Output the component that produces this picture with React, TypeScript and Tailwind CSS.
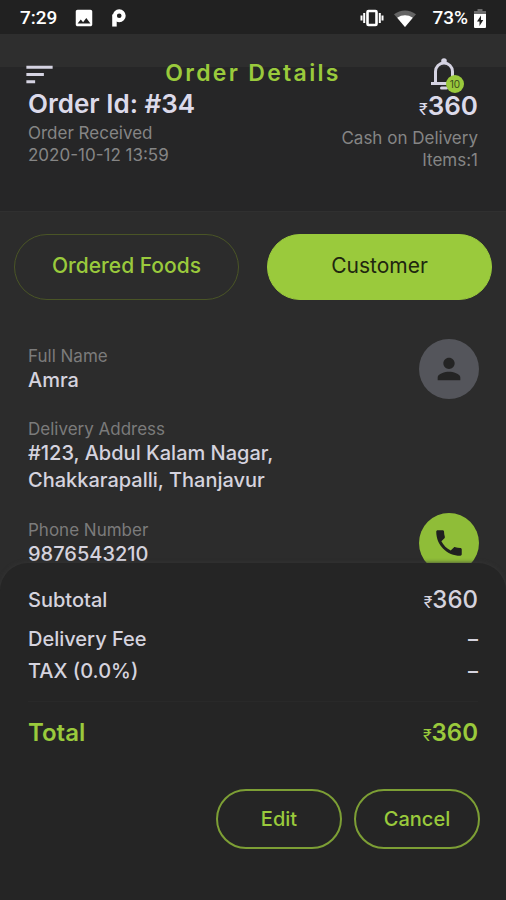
import { MdImage, MdPerson, MdPhone, MdSort } from 'react-icons/md';
import clsx from 'clsx';

interface Charge {
    label: string;
    amount: number | null;
}

const order = {
    id: 34,
    status: 'Order Received',
    date: '2020-10-12 13:59',
    payment: 'Cash on Delivery',
    items: 1,
    total: 360,
};

const charges: Charge[] = [
    { label: 'Delivery Fee', amount: null },
    { label: 'TAX (0.0%)', amount: null },
];

function Price({ value }: { value: number }) {
    return (
        <span>
            <span className="text-base font-normal">₹</span>
            {value}
        </span>
    );
}

function StatusBar() {
    return (
        <div className="flex h-[34px] items-center justify-between bg-[#212121] px-5 pt-0.5 font-['Roboto',sans-serif] text-[19px] font-medium text-white">
            <div className="flex items-center">
                <span>7:29</span>
                <MdImage className="ml-4 size-[22px]" />
                <svg viewBox="0 0 16 20" className="ml-4 h-[18px] w-[15px]" fill="none" stroke="currentColor" strokeWidth="4.600">
                    <circle cx="8.800" cy="7.500" r="4.900" />
                    <path d="M3.500 6v13.500" strokeWidth="5" />
                </svg>
            </div>
            <div className="flex items-center">
                <svg viewBox="0 0 24 18" className="h-[18px] w-6" fill="none" stroke="currentColor" strokeWidth="2">
                    <rect x="7.500" y="2" width="9" height="14" rx="1" strokeWidth="2.600" />
                    <path d="M4.200 4v10M19.800 4v10M1.500 6.500v5M22.500 6.500v5" />
                </svg>
                <svg viewBox="0 0 22 17" className="ml-2.5 h-[17px] w-[22px]" fill="currentColor">
                    <path d="M0 4.200C6.500-.9 15.500-.9 22 4.200L11 17z" opacity=".3" />
                    <path d="M3.200 7.800C8 4.500 14 4.500 18.800 7.800L11 17z" />
                </svg>
                <span className="ml-4">73%</span>
                <svg viewBox="0 0 12 19" className="ml-1.5 h-[19px] w-3">
                    <path d="M3.500 0h5v2H12v3H0V2h3.500z" fill="#6b6b6b" />
                    <path d="M0 5h12v13a1 1 0 0 1-1 1H1a1 1 0 0 1-1-1z" fill="#fff" />
                    <path d="M7 6.500 3 12.500h2.500V17L9.300 11H7z" fill="#212121" />
                </svg>
            </div>
        </div>
    );
}

function BellIcon() {
    return (
        <svg viewBox="0 0 28 34" className="h-[34px] w-7" fill="none" stroke="currentColor" strokeWidth="3">
            <path d="M5.500 26V14.500a8.500 8.500 0 0 1 17 0V26" />
            <path d="M1 26.500h26" />
            <path d="M11.500 31h5" strokeLinecap="round" />
            <circle cx="14" cy="4" r="2.800" fill="currentColor" stroke="none" />
        </svg>
    );
}

function Header() {
    return (
        <header className="bg-[linear-gradient(#2e2e2e_33px,#262627_33px)] px-7 pb-10 pt-[22px]">
            <div className="grid h-9 grid-cols-[1fr_auto_1fr] items-center">
                <button aria-label="Menu" className="-ml-1.5 justify-self-start text-[#d5d3e2]">
                    <MdSort className="size-[35px]" />
                </button>
                <h1 className="pb-0.5 text-[23px] font-semibold leading-7 tracking-widest text-[#9aca3c]">Order Details</h1>
                <button aria-label="Notifications" className="relative mr-5 justify-self-end text-[#d5d3e2]">
                    <BellIcon />
                    <span className="absolute -bottom-0.5 -right-1.5 flex size-[18px] items-center justify-center rounded-full bg-[#9aca3c] text-[10px] text-[#3a4a1c]">
                        10
                    </span>
                </button>
            </div>
            <div className="flex justify-between text-[17px] leading-[22px] text-[#858585]">
                <div>
                    <h2 className="mb-1.5 text-[26px] font-semibold leading-6 text-[#dcdaea]">Order Id: #{order.id}</h2>
                    <p>{order.status}</p>
                    <p>{order.date}</p>
                </div>
                <div className="text-right">
                    <p className="mb-1.5 text-[26px] font-semibold leading-7 text-[#dcdaea]">
                        <Price value={order.total} />
                    </p>
                    <p>{order.payment}</p>
                    <p>Items:{order.items}</p>
                </div>
            </div>
        </header>
    );
}

function Tab({ label, active }: { label: string; active?: boolean }) {
    return (
        <button
            role="tab"
            aria-selected={!!active}
            className={clsx(
                'h-[66px] rounded-full border pb-0.5 text-[21px]',
                active
                    ? 'border-[#9aca3c] bg-[#9aca3c] text-[#20260f]'
                    : 'border-[#4a5526] font-medium text-[#9aca3c]',
            )}
        >
            {label}
        </button>
    );
}

function Field({ label, value }: { label: string; value: string }) {
    return (
        <dl>
            <dt className="text-[17px] leading-[22px] text-[#7b7b7b]">{label}</dt>
            <dd className="text-xl font-medium leading-[27px] text-[#d5d3de]">{value}</dd>
        </dl>
    );
}

function Customer() {
    return (
        <section className="mt-[39px] flex flex-col gap-[19px] pl-7 pr-[27px]">
            <div className="flex items-center justify-between">
                <Field label="Full Name" value="Amra" />
                <div className="flex size-[60px] items-center justify-center rounded-full bg-[#54555b] text-[#242424]">
                    <MdPerson className="size-[34px]" />
                </div>
            </div>
            <div className="max-w-72">
                <Field label="Delivery Address" value="#123, Abdul Kalam Nagar, Chakkarapalli, Thanjavur" />
            </div>
            <div className="flex items-center justify-between">
                <Field label="Phone Number" value="9876543210" />
                <button
                    aria-label="Call customer"
                    className="flex size-[60px] items-center justify-center rounded-full bg-[#8fbd38] text-[#202020]"
                >
                    <MdPhone className="size-[34px]" />
                </button>
            </div>
        </section>
    );
}

function Summary() {
    return (
        <footer className="relative -mt-7 rounded-t-[28px] bg-[#252525] px-7 pb-[51px] pt-[21px] text-xl font-medium leading-8 text-[#d5d3de] shadow-[0_0_4px_#363636]">
            <div className="mb-[7px] flex justify-between">
                <span>Subtotal</span>
                <span className="text-2xl leading-8">
                    <Price value={order.total} />
                </span>
            </div>
            {charges.map(charge => (
                <div key={charge.label} className="flex justify-between">
                    <span>{charge.label}</span>
                    {charge.amount === null ? <span>–</span> : <Price value={charge.amount} />}
                </div>
            ))}
            <hr className="mb-[15px] mt-[14px] border-[#292929]" />
            <div className="flex justify-between text-2xl font-semibold leading-8 text-[#9aca3c]">
                <span>Total</span>
                <Price value={order.total} />
            </div>
            <div className="-mr-0.5 mt-10 flex justify-end gap-3 text-[#9aca3c]">
                <button className="h-[60px] w-[126px] rounded-full border-2 border-[#7d9f35]">Edit</button>
                <button className="h-[60px] w-[126px] rounded-full border-2 border-[#7d9f35]">Cancel</button>
            </div>
        </footer>
    );
}

export default function App() {
    return (
        <div className="flex min-h-screen flex-col bg-[#2c2c2c] font-['Inter',sans-serif]">
            <StatusBar />
            <Header />
            <main className="flex-1 border-t border-[#303030] pt-[22px]">
                <div role="tablist" className="grid grid-cols-2 gap-7 px-[14px]">
                    <Tab label="Ordered Foods" />
                    <Tab label="Customer" active />
                </div>
                <Customer />
            </main>
            <Summary />
        </div>
    );
}
